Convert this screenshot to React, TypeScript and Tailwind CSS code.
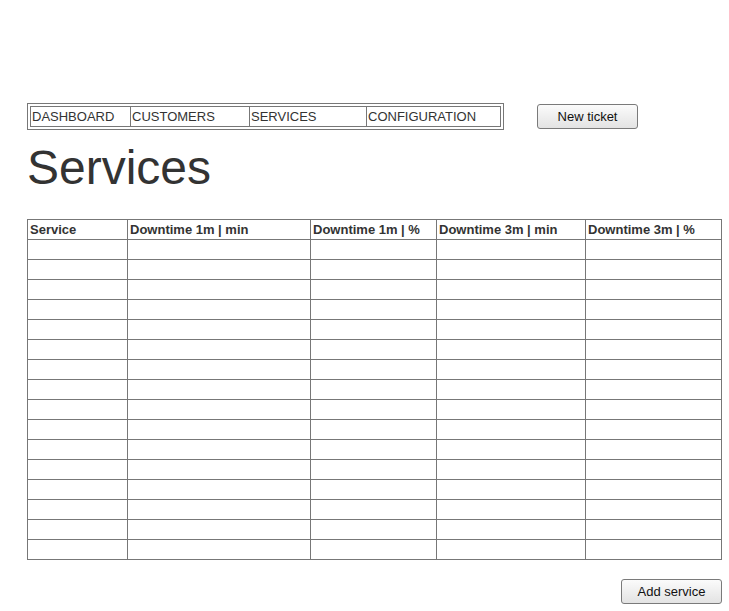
const navItems = [
  { label: "DASHBOARD", w: "w-[100px]" },
  { label: "CUSTOMERS", w: "w-[119px]" },
  { label: "SERVICES", w: "w-[117px]" },
  { label: "CONFIGURATION", w: "w-[134px]" },
];

const columns = [
  { label: "Service", w: "w-[100px]" },
  { label: "Downtime 1m | min", w: "w-[183px]" },
  { label: "Downtime 1m | %", w: "w-[126px]" },
  { label: "Downtime 3m | min", w: "w-[149px]" },
  { label: "Downtime 3m | %", w: "w-[136px]" },
];

const rows = Array.from({ length: 16 }, (_, i) => i);

function Button({ children }: { children: React.ReactNode }) {
  return (
    <button className="h-[25px] w-[101px] rounded-[3px] border border-[#7a7a7a] bg-gradient-to-b from-[#fbfbfb] to-[#e3e3e3] text-[13px] leading-none text-[#111]">
      {children}
    </button>
  );
}

export default function App() {
  return (
    <div className="min-h-[611px] bg-white pl-[27px] pt-[103px] font-['Liberation_Sans',Arial,sans-serif] text-[#333]">
      <div className="flex items-start">
        <nav className="border border-[#777] p-[2px]">
          <div className="flex border-y border-l border-[#777]">
            {navItems.map((n) => (
              <div
                key={n.label}
                className={`${n.w} h-[19px] border-r border-[#777] pl-[1px] text-[13px] leading-[19px]`}
              >
                {n.label}
              </div>
            ))}
          </div>
        </nav>
        <div className="ml-[33px] mt-[1px]">
          <Button>New ticket</Button>
        </div>
      </div>

      <h1 className="mt-[14px] text-[48px] leading-[48px] font-normal text-[#333]">Services</h1>

      <div className="mt-[27px] w-[695px]">
        <div className="border-l border-t border-[#777]">
          <div className="flex">
            {columns.map((c) => (
              <div
                key={c.label}
                className={`${c.w} h-[20px] border-b border-r border-[#777] pl-[2px] text-[13px] font-bold leading-[19px] text-[#333]`}
              >
                {c.label}
              </div>
            ))}
          </div>
          {rows.map((r) => (
            <div key={r} className="flex">
              {columns.map((c) => (
                <div key={c.label} className={`${c.w} h-[20px] border-b border-r border-[#777]`} />
              ))}
            </div>
          ))}
        </div>
        <div className="mt-[19px] flex justify-end">
          <Button>Add service</Button>
        </div>
      </div>
    </div>
  );
}
